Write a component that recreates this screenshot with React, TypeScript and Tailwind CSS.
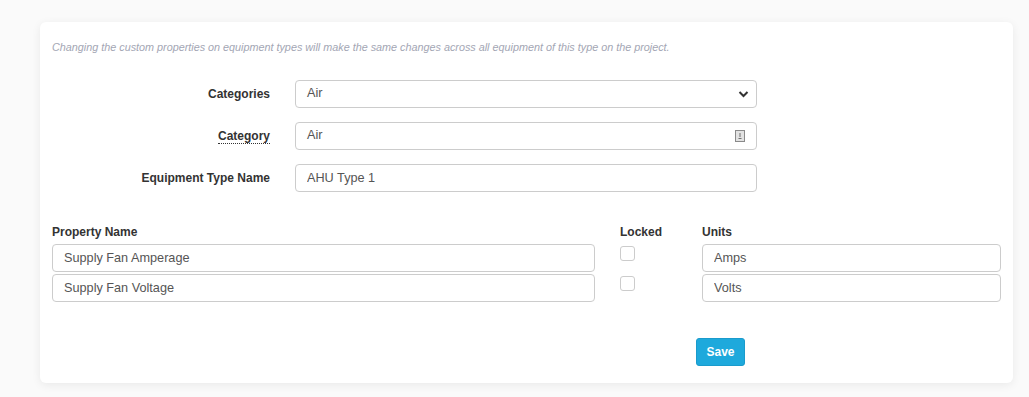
import { useState } from 'react';

interface PropRow {
  name: string;
  locked: boolean;
  units: string;
}

const inputCls =
  'h-[28px] w-full rounded-[4px] border border-[#cccccc] bg-white px-[11px] text-[12.7px] text-[#555555] outline-none';

const App: React.FC = () => {
  const [rows, setRows] = useState<PropRow[]>([
    { name: 'Supply Fan Amperage', locked: false, units: 'Amps' },
    { name: 'Supply Fan Voltage', locked: false, units: 'Volts' },
  ]);

  const update = (i: number, patch: Partial<PropRow>) =>
    setRows((r) => r.map((row, idx) => (idx === i ? { ...row, ...patch } : row)));

  return (
    <div
      className="h-[397px] w-full bg-[#fafafa] pl-[40px] pt-[22px]"
      style={{ fontFamily: '"Liberation Sans", Arial, sans-serif' }}
    >
      <div className="h-[361px] w-[973px] rounded-[6px] bg-white px-[12px] pt-[19px] shadow-[0_2px_10px_rgba(0,0,0,0.07)]">
        {/* Notice */}
        <p className="text-[10.8px] italic leading-[13px] text-[#a3a6b4]">
          Changing the custom properties on equipment types will make the same changes across all
          equipment of this type on the project.
        </p>

        {/* Type fields */}
        <div className="mt-[26px] flex flex-col gap-[14px]">
          <div className="flex items-center">
            <label className="w-[218px] text-right text-[12px] font-bold text-[#333333]">
              Categories
            </label>
            <div className="relative ml-[25px] w-[462px]">
              <div className={`${inputCls} flex items-center`}>Air</div>
              <svg
                className="absolute right-[8px] top-1/2 -translate-y-1/2"
                width="11"
                height="8"
                viewBox="0 0 11 8"
                fill="none"
              >
                <path d="M1.5 2l4 4 4-4" stroke="#333" strokeWidth="2" />
              </svg>
            </div>
          </div>

          <div className="flex items-center">
            <label className="w-[218px] text-right text-[12px] font-bold text-[#333333]">
              <span className="border-b border-dotted border-[#333333]">Category</span>
            </label>
            <div className="relative ml-[25px] w-[462px]">
              <div className={`${inputCls} flex items-center`}>Air</div>
              <svg
                className="absolute right-[12px] top-1/2 -translate-y-1/2"
                width="10"
                height="12"
                viewBox="0 0 10 12"
                fill="none"
              >
                <rect x="0.5" y="0.5" width="9" height="11" fill="#e2e2e2" stroke="#8a8a8a" />
                <path d="M5 3v4" stroke="#6f6f6f" strokeWidth="1" />
                <path d="M3.5 8.5h3" stroke="#6f6f6f" strokeWidth="1" />
              </svg>
            </div>
          </div>

          <div className="flex items-center">
            <label className="w-[218px] text-right text-[12px] font-bold text-[#333333]">
              Equipment Type Name
            </label>
            <div className="ml-[25px] w-[462px]">
              <input className={inputCls} defaultValue="AHU Type 1" />
            </div>
          </div>
        </div>

        {/* Properties table */}
        <div className="mt-[31px] flex text-[12px] font-bold text-[#333333]">
          <div className="w-[543px]">Property Name</div>
          <div className="ml-[25px] w-[82px]">Locked</div>
          <div className="flex-1">Units</div>
        </div>
        <div className="mt-[3px] flex flex-col gap-[2px]">
          {rows.map((row, i) => (
            <div key={i} className="flex">
              <div className="w-[543px]">
                <input
                  className={inputCls}
                  value={row.name}
                  onChange={(e) => update(i, { name: e.target.value })}
                />
              </div>
              <div className="ml-[25px] w-[82px] pt-[2px]">
                <button
                  onClick={() => update(i, { locked: !row.locked })}
                  className="block h-[15px] w-[15px] rounded-[3px] border border-[#cccccc] bg-white"
                />
              </div>
              <div className="flex-1">
                <input
                  className={inputCls}
                  value={row.units}
                  onChange={(e) => update(i, { units: e.target.value })}
                />
              </div>
            </div>
          ))}
        </div>

        <div className="mt-[36px] pl-[644px]">
          <button className="h-[28px] w-[49px] rounded-[3px] border border-[#1a9bcc] bg-[#1ea9dc] text-[12px] font-bold text-white">
            Save
          </button>
        </div>
      </div>
    </div>
  );
};

export default App;
